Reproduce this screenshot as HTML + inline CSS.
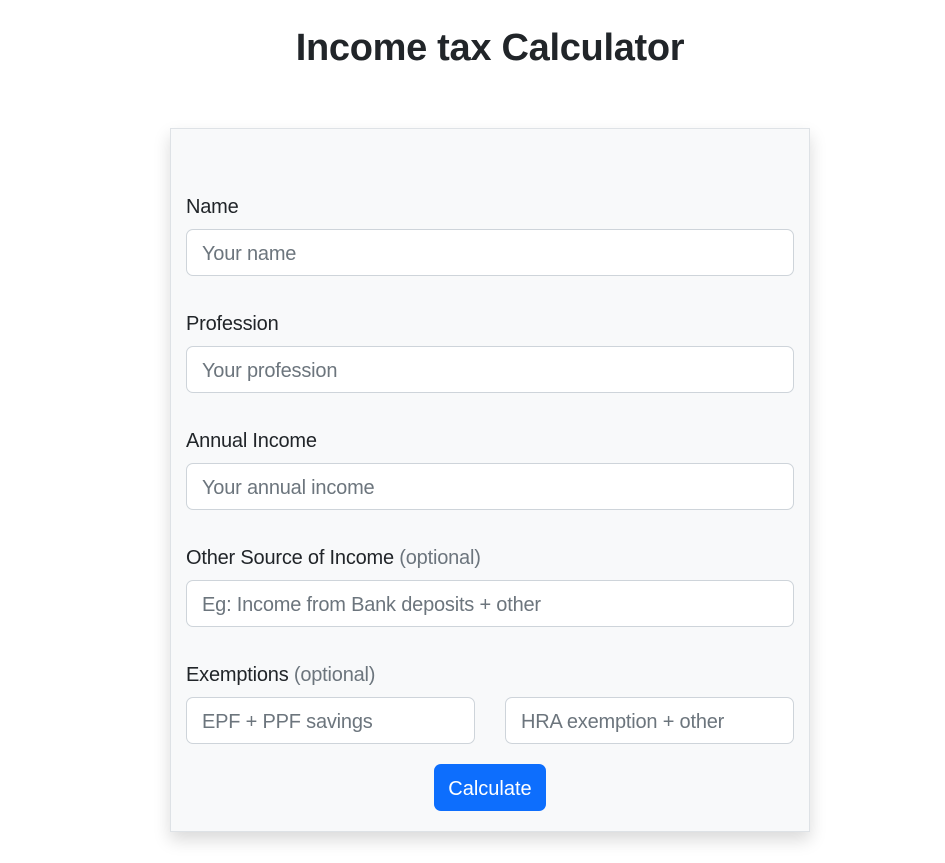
<!DOCTYPE html>
<html><head><meta charset="utf-8"><style>
*{box-sizing:border-box}
body{margin:0;background:#fff;font-family:"Liberation Sans",sans-serif;color:#212529;width:945px;height:863px;overflow:hidden}
h1{position:absolute;left:0;width:980px;top:24px;margin:0;text-align:center;font-size:38px;font-weight:bold;line-height:48px;letter-spacing:-0.3px}
.card{position:absolute;left:170px;top:128px;width:640px;height:704px;background:#f8f9fa;border:1px solid #dee2e6;box-shadow:0 8px 16px rgba(0,0,0,.15);padding:0 15px}
.lbl{position:absolute;left:15px;font-size:20px;line-height:30px;letter-spacing:-0.2px}
.lbl span{color:#6c757d}
.in{position:absolute;left:15px;width:608px;height:47px;background:#fff;border:1px solid #ced4da;border-radius:7px;padding-left:15px;font-size:20px;line-height:49px;color:#6c757d;letter-spacing:-0.2px}
.btn{position:absolute;left:263px;top:635px;width:112px;height:47px;background:#0d6efd;color:#fff;border-radius:7px;text-align:center;font-size:20px;line-height:50px}
</style></head><body>
<h1>Income tax Calculator</h1>
<div class="card">
<div class="lbl" style="top:63px">Name</div>
<div class="in" style="top:100px">Your name</div>
<div class="lbl" style="top:180px">Profession</div>
<div class="in" style="top:217px">Your profession</div>
<div class="lbl" style="top:297px">Annual Income</div>
<div class="in" style="top:334px">Your annual income</div>
<div class="lbl" style="top:414px">Other Source of Income <span>(optional)</span></div>
<div class="in" style="top:451px">Eg: Income from Bank deposits + other</div>
<div class="lbl" style="top:531px">Exemptions <span>(optional)</span></div>
<div class="in" style="top:568px;width:289px">EPF + PPF savings</div>
<div class="in" style="top:568px;left:334px;width:289px">HRA exemption + other</div>
<div class="btn">Calculate</div>
</div>
</body></html>
